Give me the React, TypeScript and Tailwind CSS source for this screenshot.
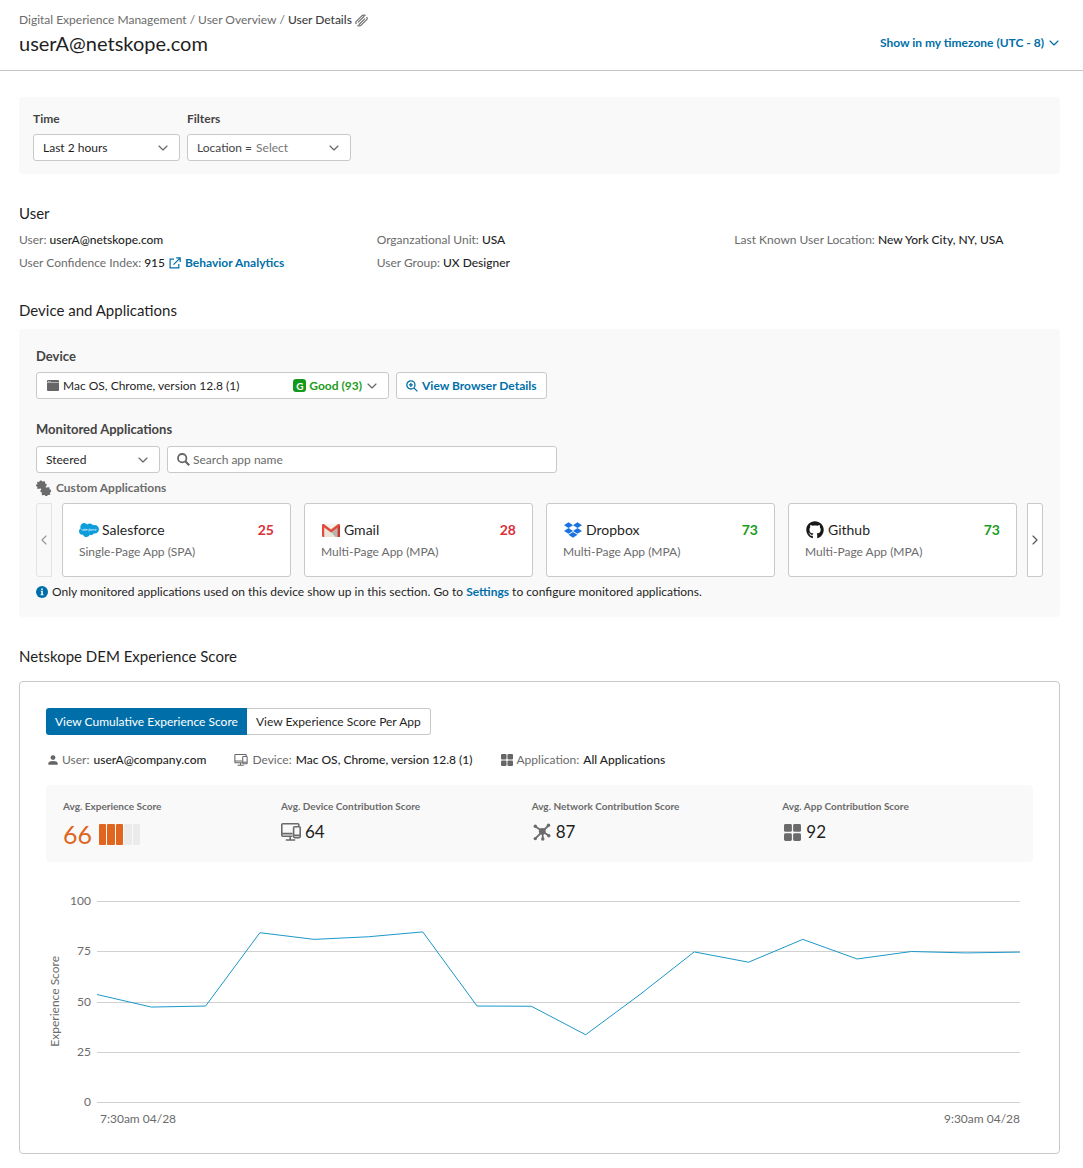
import type { ReactNode, SVGProps } from 'react'
import { clsx } from 'clsx'
import { ChevronDown, ChevronLeft, ChevronRight } from 'lucide-react'
import { FaDropbox, FaGithub, FaSalesforce } from 'react-icons/fa'

type IconProps = SVGProps<SVGSVGElement>

function TagLinkIcon(props: IconProps) {
  return (
    <svg viewBox="0 0 14 14" fill="none" stroke="currentColor" strokeWidth="1.200" strokeLinecap="round" strokeLinejoin="round" {...props}>
      <path d="M1.300 10.400c-.7-.9-.6-1.800.1-2.500L7 2.300C8 1.300 9.300 1 11.200 1.300M3.500 8.800l6.100-6.100M12.700 3.600c.7.900.6 1.800-.1 2.500L7 11.700c-1 1-2.300 1.300-4.200 1M10.500 5.200l-6.100 6.100" />
    </svg>
  )
}

function BrowserIcon(props: IconProps) {
  return (
    <svg viewBox="0 0 12 11" fill="currentColor" {...props}>
      <path d="M1 0h10a1 1 0 0 1 1 1v1.500H0V1a1 1 0 0 1 1-1Z" />
      <path d="M0 3h12v7a1 1 0 0 1-1 1H1a1 1 0 0 1-1-1Z" />
      <path d="M1.200 1h.8v.8h-.8zM2.800 1h.8v.8h-.8z" fill="#fff" />
    </svg>
  )
}

function PuzzleIcon(props: IconProps) {
  return (
    <svg viewBox="0 0 16 16" fill="currentColor" {...props}>
      <path d="M1.200 1.800 3.400 2C3 .6 5.900 0 6.300 1.500l2.600-.2.400 2.500c1.700-.5 2 2.400.3 2.500l.2 1.300 3.600-.3.200 2.300c1.800-.4 2.100 2.600.4 2.700l.300 2.500-2.600.1c.1 1.600-2.800 1.600-2.900.1l-2.900.2-.2-3c-1.600.4-2-2-.5-2.500l-.2-1.100-3.600.3-.2-2.300C-.4 6.900-.5 4.300 1.300 4.200Z" />
    </svg>
  )
}

function SearchIcon(props: IconProps) {
  return (
    <svg viewBox="0 0 13 13" fill="none" stroke="currentColor" strokeWidth="1.800" {...props}>
      <circle cx="5.200" cy="5.200" r="4.200" />
      <path d="m8.300 8.300 3.900 3.900" strokeWidth="2.200" />
    </svg>
  )
}

function ZoomInIcon(props: IconProps) {
  return (
    <svg viewBox="0 0 12 12" fill="none" stroke="currentColor" strokeWidth="1.300" {...props}>
      <circle cx="4.900" cy="4.900" r="4.100" />
      <path d="M2.900 4.900h4M4.900 2.900v4M7.900 7.900l3.500 3.500" />
    </svg>
  )
}

function ExternalIcon(props: IconProps) {
  return (
    <svg viewBox="0 0 12 12" fill="none" stroke="currentColor" strokeWidth="1.200" {...props}>
      <path d="M5 2.200H1.100v8.700h8.700V7M7.200.9h4v4M11 1.100 4.500 7.600" />
    </svg>
  )
}

function InfoIcon(props: IconProps) {
  return (
    <svg viewBox="0 0 12 12" {...props}>
      <circle cx="6" cy="6" r="6" fill="currentColor" />
      <path d="M5.300 2.500h1.500v1.400H5.300zM4.800 4.800h2v3.400h.7v1H4.600v-1h.7V5.700h-.5z" fill="#fff" />
    </svg>
  )
}

function PersonIcon(props: IconProps) {
  return (
    <svg viewBox="0 0 10 10" fill="currentColor" {...props}>
      <circle cx="5" cy="2.600" r="2.400" />
      <path d="M.3 9.800V8.600C.3 6.800 2.300 6 5 6s4.700.8 4.700 2.600v1.200Z" />
    </svg>
  )
}

function DevicesIcon(props: IconProps) {
  return (
    <svg viewBox="0 0 20 18" fill="none" stroke="currentColor" strokeWidth="1.600" {...props}>
      <path d="M11.500 13.200H1.800a1 1 0 0 1-1-1V1.800a1 1 0 0 1 1-1h15a1 1 0 0 1 1 1v1.400M1 10.600h10.500M9.200 13.200v3.500M4.800 17h9.400" />
      <rect x="12.600" y="3.800" width="6.600" height="10.800" rx="1" />
      <path d="M12.600 12.300h6.600" />
    </svg>
  )
}

function AppsIcon(props: IconProps) {
  return (
    <svg viewBox="0 0 16 16" fill="currentColor" {...props}>
      <rect width="7.400" height="7.400" rx="1.400" />
      <rect x="8.600" width="7.400" height="7.400" rx="1.400" />
      <rect y="8.600" width="7.400" height="7.400" rx="1.400" />
      <rect x="8.600" y="8.600" width="7.400" height="7.400" rx="1.400" />
    </svg>
  )
}

function NetworkIcon(props: IconProps) {
  return (
    <svg viewBox="0 0 18 18" fill="currentColor" stroke="currentColor" {...props}>
      <path d="m2.500 3.500 13 9M15.500 2.500l-13 12.800M9.500 8l.3 7.500" strokeWidth="1.800" fill="none" />
      <g stroke="none">
        <circle cx="9.300" cy="8.300" r="3.400" />
        <circle cx="2.300" cy="3.300" r="1.700" />
        <circle cx="15.500" cy="2.300" r="1.700" />
        <circle cx="15.800" cy="12.700" r="1.700" />
        <circle cx="2.300" cy="15.600" r="1.700" />
        <circle cx="9.800" cy="16" r="1.700" />
      </g>
    </svg>
  )
}

function GmailIcon(props: IconProps) {
  return (
    <svg viewBox="0 0 18 13" {...props}>
      <path d="M1 0h16v13H1z" fill="#e8e4d9" />
      <path d="m9 8 8-6v11h-3.500z" fill="#b9b3a8" />
      <path d="M2.500 0h13L9 4.800z" fill="#f5f2ec" />
      <path d="M0 1.300V12a1 1 0 0 0 1 1h1.200V3.400L9 8.500l6.800-5.100V13H17a1 1 0 0 0 1-1V1.300C18 .3 16.700-.4 15.700.4L9 5.400 2.300.4C1.300-.4 0 .3 0 1.300Z" fill="#e5483d" />
      <path d="M15.800 3.400 18 1.800V12a1 1 0 0 1-1 1h-1.200z" fill="#c4352c" />
    </svg>
  )
}

const userDetails = [
  { label: 'User:', value: 'userA@netskope.com' },
  { label: 'Organzational Unit:', value: 'USA' },
  { label: 'Last Known User Location:', value: 'New York City, NY, USA' },
  { label: 'User Confidence Index:', value: '915', link: 'Behavior Analytics' },
  { label: 'User Group:', value: 'UX Designer' },
]

const apps = [
  { name: 'Salesforce', type: 'Single-Page App (SPA)', score: 25, icon: <FaSalesforce className="h-4 w-5 text-[#0d9ddb]" /> },
  { name: 'Gmail', type: 'Multi-Page App (MPA)', score: 28, icon: <GmailIcon className="h-[13px] w-[18px]" /> },
  { name: 'Dropbox', type: 'Multi-Page App (MPA)', score: 73, icon: <FaDropbox className="size-[18px] text-[#1a73e0]" /> },
  { name: 'Github', type: 'Multi-Page App (MPA)', score: 73, icon: <FaGithub className="size-[18px] text-[#181818]" /> },
]

const contributions = [
  { label: 'Avg. Device Contribution Score', score: 64, icon: <DevicesIcon className="h-[18px] w-5" /> },
  { label: 'Avg. Network Contribution Score', score: 87, icon: <NetworkIcon className="size-[18px]" /> },
  { label: 'Avg. App Contribution Score', score: 92, icon: <AppsIcon className="size-[17px]" /> },
]

const ticks = [100, 75, 50, 25, 0]
const scores = [53.7, 47.5, 48, 84.3, 81, 82.3, 84.7, 48, 47.9, 33.8, 53.7, 74.8, 69.7, 81, 71.3, 75, 74.3, 74.7]

const box = 'flex h-[27px] items-center rounded-[3px] border border-[#c9c9c9] bg-white'

function Dropdown({ id, value, className, before, after, muted }: {
  id: string
  value: string
  className: string
  before?: ReactNode
  after?: ReactNode
  muted?: boolean
}) {
  return (
    <div className={clsx(box, 'pr-2 pl-[9px]', className)}>
      {before}
      <select
        id={id}
        className={clsx('min-w-0 flex-1 appearance-none bg-transparent outline-none', muted ? 'text-[#757575]' : 'text-[#1f1f1f]')}
      >
        <option>{value}</option>
      </select>
      {after}
      <ChevronDown className="pointer-events-none size-4 shrink-0 text-[#666]" strokeWidth={1.75} aria-hidden="true" />
    </div>
  )
}

function Meta({ icon, label, value }: { icon: ReactNode; label: string; value: string }) {
  return (
    <div className="flex items-center gap-1">
      {icon}
      <span className="text-[#6b6b6b]">{label}</span>
      <span className="font-medium">{value}</span>
    </div>
  )
}

function ScoreChart() {
  const points = scores.map((s, i) => `${(i * 1000) / (scores.length - 1)},${(100 - s) * 2}`).join(' ')

  return (
    <div className="mt-[31px] flex text-[#6b6b6b]">
      <div className="flex h-[217px] w-[18px] items-center justify-center">
        <span className="rotate-180 [writing-mode:vertical-rl]">Experience Score</span>
      </div>
      <div className="flex h-[217px] w-[27px] flex-col justify-between text-right">
        {ticks.map((t) => (
          <span key={t}>{t}</span>
        ))}
      </div>
      <div className="mr-[13px] ml-1.5 min-w-0 flex-1 pt-2">
        <div className="relative">
          <div className="flex h-[202px] flex-col justify-between">
            {ticks.map((t) => (
              <div key={t} className="h-px bg-[#d0d0d0]" />
            ))}
          </div>
          <svg className="absolute inset-0 h-full w-full" viewBox="0 0 1000 200" preserveAspectRatio="none" aria-label="Experience score over time">
            <polyline points={points} fill="none" stroke="#1b98c9" vectorEffect="non-scaling-stroke" />
          </svg>
        </div>
        <div className="mt-2 flex justify-between pl-[3px]">
          <span>7:30am 04/28</span>
          <span>9:30am 04/28</span>
        </div>
      </div>
    </div>
  )
}

export default function App() {
  return (
    <div className="bg-white font-['Lato',sans-serif] text-[12px] leading-4 text-[#1f1f1f]">
      <header className="flex items-end justify-between border-b border-[#c4c4c4] pt-3 pr-[21px] pb-[13px] pl-[19px]">
        <div>
          <nav className="flex items-center gap-[3px] text-[#6b6b6b]" aria-label="Breadcrumb">
            <a href="#dem">Digital Experience Management</a>
            <span>/</span>
            <a href="#overview">User Overview</a>
            <span>/</span>
            <span className="font-medium text-[#3d3d3d]" aria-current="page">User Details</span>
            <TagLinkIcon className="size-[13px]" />
          </nav>
          <h1 className="mt-px text-[20px] leading-7">userA@netskope.com</h1>
        </div>
        <button className="mb-1.5 flex items-center gap-0.5 font-bold text-[#006fa9]">
          Show in my timezone (UTC - 8)
          <ChevronDown className="size-4" strokeWidth={1.75} />
        </button>
      </header>

      <main className="pt-[26px] pr-[23px] pb-[13px] pl-[19px]">
        <div className="flex gap-[7px] rounded-[4px] bg-[#f9f9f9] px-[14px] pt-[14px] pb-[13px]">
          <div className="flex flex-col gap-[7px]">
            <label htmlFor="time" className="font-bold text-[#444]">Time</label>
            <Dropdown id="time" value="Last 2 hours" className="w-[147px]" />
          </div>
          <div className="flex flex-col gap-[7px]">
            <label htmlFor="location" className="font-bold text-[#444]">Filters</label>
            <Dropdown
              id="location"
              value="Select"
              muted
              className="w-[164px]"
              before={<span className="mr-1 text-[#444]">Location =</span>}
            />
          </div>
        </div>

        <section className="mt-[27px]">
          <h2 className="text-[15px] leading-6">User</h2>
          <dl className="mt-[7px] grid grid-cols-3 gap-x-8 gap-y-[7px]">
            {userDetails.map((d) => (
              <div key={d.label} className="flex gap-[3px]">
                <dt className="text-[#6b6b6b]">{d.label}</dt>
                <dd className="flex items-center gap-1 font-medium">
                  {d.value}
                  {d.link && (
                    <a href="#analytics" className="flex items-center gap-1 font-bold text-[#006fa9]">
                      <ExternalIcon className="size-3" />
                      {d.link}
                    </a>
                  )}
                </dd>
              </div>
            ))}
          </dl>
        </section>

        <section className="mt-[27px]">
          <h2 className="text-[15px] leading-6">Device and Applications</h2>
          <div className="mt-[7px] rounded-[4px] bg-[#f9f9f9] px-[17px] pt-[19px] pb-[17px]">
            <label htmlFor="device" className="block text-[13px] font-bold text-[#444]">Device</label>
            <div className="mt-2 flex gap-[7px]">
              <Dropdown
                id="device"
                value="Mac OS, Chrome, version 12.8 (1)"
                className="w-[353px]"
                before={<BrowserIcon className="mr-1 ml-px h-[11px] w-3 shrink-0 text-[#666]" />}
                after={
                  <span className="mr-0.5 flex shrink-0 items-center gap-[3px] font-bold text-[#1c9c1c]">
                    <span className="flex size-[13px] items-center justify-center rounded-[3px] bg-[#14991c] text-[10px] text-white">G</span>
                    Good (93)
                  </span>
                }
              />
              <button className={clsx(box, 'gap-1 px-[9px] font-bold text-[#006fa9]')}>
                <ZoomInIcon className="size-3" />
                View Browser Details
              </button>
            </div>

            <label htmlFor="steering" className="mt-[22px] block text-[13px] font-bold text-[#444]">Monitored Applications</label>
            <div className="mt-[9px] flex gap-[7px]">
              <Dropdown id="steering" value="Steered" className="w-[124px]" />
              <div className={clsx(box, 'w-[390px] gap-[3px] px-[9px]')}>
                <SearchIcon className="size-[13px] shrink-0 text-[#666]" />
                <input
                  type="search"
                  aria-label="Search app name"
                  placeholder="Search app name"
                  className="min-w-0 flex-1 bg-transparent outline-none placeholder:text-[#6b6b6b]"
                />
              </div>
            </div>
            <h3 className="mt-[7px] flex items-center gap-1 font-bold text-[#6b6b6b]">
              <PuzzleIcon className="size-4" />
              Custom Applications
            </h3>

            <div className="mt-[7px] flex h-[74px] gap-[10px]">
              <button aria-label="Previous" disabled className="flex w-4 shrink-0 items-center justify-center rounded-l-[3px] border border-[#e3e3e3] text-[#999]">
                <ChevronLeft className="size-4 shrink-0" strokeWidth={1.75} />
              </button>
              <div className="grid flex-1 grid-cols-4 gap-[13px]">
                {apps.map((app) => (
                  <article key={app.name} className="flex flex-col justify-center rounded-[3px] border border-[#c9c9c9] bg-white px-4">
                    <div className="flex h-6 items-center gap-[3px] text-[14px]">
                      <span className="flex w-5 justify-center">{app.icon}</span>
                      <h4>{app.name}</h4>
                      <span className={clsx('ml-auto font-bold', app.score < 50 ? 'text-[#d9303a]' : 'text-[#1c9c1c]')}>{app.score}</span>
                    </div>
                    <p className="leading-5 text-[#6b6b6b]">{app.type}</p>
                  </article>
                ))}
              </div>
              <button aria-label="Next" className="flex w-4 shrink-0 items-center justify-center rounded-r-[3px] border border-[#c9c9c9] bg-white text-[#555]">
                <ChevronRight className="size-4 shrink-0" strokeWidth={1.75} />
              </button>
            </div>
            <p className="mt-[7px] flex items-center gap-1">
              <InfoIcon className="size-3 text-[#006fa9]" />
              <span>
                Only monitored applications used on this device show up in this section. Go to{' '}
                <a href="#settings" className="font-bold text-[#006fa9]">Settings</a> to configure monitored applications.
              </span>
            </p>
          </div>
        </section>

        <section className="mt-[27px]">
          <h2 className="text-[15px] leading-6">Netskope DEM Experience Score</h2>
          <div className="mt-[13px] rounded-[4px] border border-[#c9c9c9] p-[26px]">
            <div className="flex">
              <button className="h-[27px] rounded-l-[3px] bg-[#006fa9] px-[9px] text-white">View Cumulative Experience Score</button>
              <button className="h-[27px] rounded-r-[3px] border border-l-0 border-[#c9c9c9] px-[9px]">View Experience Score Per App</button>
            </div>
            <div className="mt-[17px] flex gap-7 text-[#1f1f1f]">
              <Meta icon={<PersonIcon className="ml-0.5 size-[10px] text-[#666]" />} label="User:" value="userA@company.com" />
              <Meta icon={<DevicesIcon className="h-3 w-[14px] text-[#666]" />} label="Device:" value="Mac OS, Chrome, version 12.8 (1)" />
              <Meta icon={<AppsIcon className="size-3 text-[#666]" />} label="Application:" value="All Applications" />
            </div>

            <div className="mt-[17px] flex h-[77px] rounded-[4px] bg-[#f9f9f9] pt-[13px] pl-[17px]">
              <div className="w-[218px]">
                <h3 className="text-[10px] font-bold text-[#6b6b6b]">Avg. Experience Score</h3>
                <div className="mt-2 flex items-center gap-[7px] text-[25px] leading-6 text-[#e0651f]">
                  66
                  <div className="flex w-[41px] gap-px">
                    {[1, 2, 3, 4, 5].map((n) => (
                      <span key={n} className={clsx('h-[21px] flex-1 rounded-[1px]', n <= 3 ? 'bg-[#e0651f]' : 'bg-[#ebebeb]')} />
                    ))}
                  </div>
                </div>
              </div>
              {contributions.map((c) => (
                <div key={c.label} className="flex-1">
                  <h3 className="text-[10px] font-bold text-[#6b6b6b]">{c.label}</h3>
                  <div className="mt-1.5 flex items-center gap-1 text-[17px] leading-6">
                    <span className="flex w-5 justify-center text-[#6b6b6b]">{c.icon}</span>
                    {c.score}
                  </div>
                </div>
              ))}
            </div>

            <ScoreChart />
          </div>
        </section>
      </main>
    </div>
  )
}
